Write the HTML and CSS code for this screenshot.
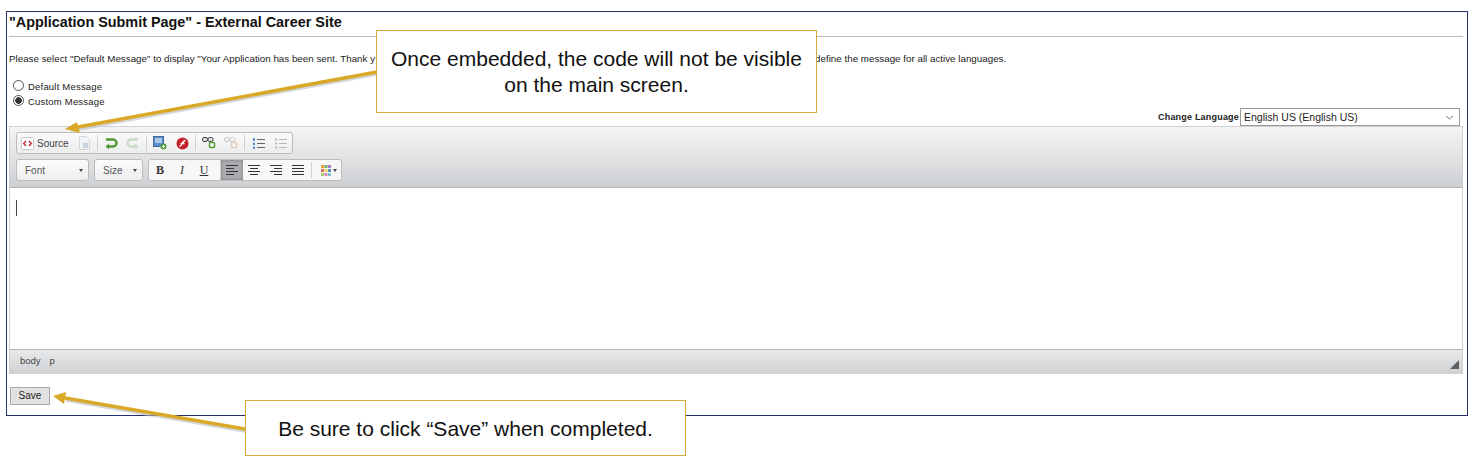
FILE: index.html
```html
<!DOCTYPE html>
<html>
    <head>
        <meta charset="utf-8">
        <title>Application Submit Page</title>
        <link rel="stylesheet" href="styles.css">
    </head>
    <body>
        <div class="frame">
            <h1 class="title">"Application Submit Page" - External Career Site</h1>
            <p class="intro"><span class="intro-left">Please select "Default Message" to display "Your Application has been sent. Thank y</span><span class="intro-right">define the message for all active languages.</span></p>
            <div class="radios">
                <label class="radio"><span class="dot"></span>Default Message</label>
                <label class="radio"><span class="dot on"></span>Custom Message</label>
            </div>
            <div class="lang">
                <span class="lang-label">Change Language</span>
                <div class="select">English US (English US)
                    <svg width="9" height="5" viewBox="0 0 9 5"><path d="M1 1l3.5 3L8 1" fill="none" stroke="#777"/></svg>
                </div>
            </div>

            <div class="editor">
                <div class="toolbar">
                    <div class="row">
                        <div class="group">
                            <span class="btn source">
                                <svg width="13" height="13" viewBox="0 0 13 13"><rect x=".5" y=".5" width="12" height="12" rx="1" fill="#fff" stroke="#c9c9c9"/><path d="M5 4L2.7 6.5 5 9M8 4l2.3 2.5L8 9" fill="none" stroke="#c8333a" stroke-width="1.5"/></svg>
                                Source
                            </span>
                            <span class="btn w22 faded">
                                <svg width="13" height="14" viewBox="0 0 13 14"><path d="M1.5.5h7l3 3v10h-10z" fill="#f2f4f6" stroke="#b9c0c8"/><rect x="5" y="7" width="5" height="5" fill="#a9bdd2"/></svg>
                            </span>
                            <i class="sep"></i>
                            <span class="btn w22">
                                <svg width="14" height="13" viewBox="0 0 14 13"><path d="M2 2.5h7a3.5 3.5 0 010 7H4" fill="none" stroke="#4f9a35" stroke-width="2.4"/><path d="M5 6.5L1.5 9.5 5 12.5z" fill="#4f9a35"/></svg>
                            </span>
                            <span class="btn w22">
                                <svg width="14" height="13" viewBox="0 0 14 13"><path d="M12 2.5H5a3.5 3.5 0 000 7h5" fill="none" stroke="#c6dcc4" stroke-width="2.4"/><path d="M9 6.5l3.5 3-3.500 3z" fill="#c6dcc4"/></svg>
                            </span>
                            <i class="sep"></i>
                            <span class="btn w22">
                                <svg width="14" height="14" viewBox="0 0 14 14"><rect x=".5" y=".5" width="10" height="10" fill="#5b8dc9" stroke="#3e6a9e"/><rect x="2" y="2" width="7" height="5" fill="#a9c8ea"/><circle cx="10.500" cy="10.500" r="3" fill="#4f9a35"/><path d="M8.800 10.500h3.400M10.500 8.800v3.400" stroke="#fff"/></svg>
                            </span>
                            <span class="btn w22">
                                <svg width="13" height="13" viewBox="0 0 13 13"><circle cx="6.500" cy="6.500" r="6" fill="#c4202a"/><path d="M3.500 9.500c2.500 0 2.500-6 6-6M4.500 6.500h4" fill="none" stroke="#fff" stroke-width="1.300"/></svg>
                            </span>
                            <i class="sep"></i>
                            <span class="btn w22">
                                <svg width="14" height="12" viewBox="0 0 14 12"><rect x=".5" y=".5" width="5" height="4" rx="1.500" fill="#ddd" stroke="#444"/><rect x="6" y=".5" width="5" height="4" rx="1.500" fill="#ddd" stroke="#444"/><rect x="7.500" y="5.500" width="5" height="5" rx="1" fill="#fff" stroke="#4f9a35" stroke-width="1.500"/></svg>
                            </span>
                            <span class="btn w22 faded">
                                <svg width="14" height="12" viewBox="0 0 14 12"><rect x=".5" y=".5" width="5" height="4" rx="1.500" fill="#eee" stroke="#aaa"/><rect x="6" y=".5" width="5" height="4" rx="1.500" fill="#eee" stroke="#aaa"/><rect x="7.500" y="5.500" width="5" height="5" rx="1" fill="#fff" stroke="#e2b28c" stroke-width="1.500"/></svg>
                            </span>
                            <i class="sep"></i>
                            <span class="btn w22">
                                <svg width="13" height="13" viewBox="0 0 13 13"><path d="M5 2.500h8M5 6.500h8M5 10.500h8" stroke="#666"/><path d="M1 1h2v3H1zM1 5.500h2v2.500H1zM1 9.500h2V12H1z" fill="#5b8dc9"/></svg>
                            </span>
                            <span class="btn w22 faded">
                                <svg width="13" height="13" viewBox="0 0 13 13"><path d="M5 2.500h8M5 6.500h8M5 10.500h8" stroke="#888"/><path d="M1 1.500h2v2H1zM1 5.500h2v2H1zM1 9.500h2v2H1z" fill="#8a94a0"/></svg>
                            </span>
                        </div>
                    </div>
                    <div class="row">
                        <div class="combo font-combo">Font<b class="caret"></b></div>
                        <div class="combo size-combo">Size<b class="caret"></b></div>
                        <div class="group tall">
                            <span class="btn w22 fmt bold">B</span>
                            <span class="btn w22 fmt ital">I</span>
                            <span class="btn w22 fmt under">U</span>
                            <i class="sep flush"></i>
                            <span class="btn w22 align active">
                                <svg width="12" height="11" viewBox="0 0 12 11"><path d="M0 .5h12M0 3.500h8M0 6.500h12M0 9.500h8" stroke="#333"/></svg>
                            </span>
                            <span class="btn w22 align">
                                <svg width="12" height="11" viewBox="0 0 12 11"><path d="M0 .5h12M2 3.500h8M0 6.500h12M2 9.500h8" stroke="#333"/></svg>
                            </span>
                            <span class="btn w22 align">
                                <svg width="12" height="11" viewBox="0 0 12 11"><path d="M0 .5h12M4 3.500h8M0 6.500h12M4 9.500h8" stroke="#333"/></svg>
                            </span>
                            <span class="btn w22 align">
                                <svg width="12" height="11" viewBox="0 0 12 11"><path d="M0 .5h12M0 3.500h12M0 6.500h12M0 9.500h12" stroke="#333"/></svg>
                            </span>
                            <i class="sep"></i>
                            <span class="btn colors">
                                <svg width="10" height="11" viewBox="0 0 10 11"><path d="M0 0h3v3H0z" fill="#d9a441"/><path d="M3.500 0h3v3h-3z" fill="#6fae5b"/><path d="M7 0h3v3H7z" fill="#b678c9"/><path d="M0 4h3v3H0z" fill="#e0705a"/><path d="M3.500 4h3v3h-3z" fill="#e8d35c"/><path d="M7 4h3v3H7z" fill="#5b8dc9"/><path d="M0 8h3v3H0z" fill="#a9c86a"/><path d="M3.500 8h3v3h-3z" fill="#d98ab0"/><path d="M7 8h3v3H7z" fill="#79c4cf"/></svg>
                                <b class="caret small"></b>
                            </span>
                        </div>
                    </div>
                </div>
                <div class="content"><span class="cursor"></span></div>
                <div class="statusbar">
                    <span>body</span><span>p</span>
                    <svg class="grip" width="9" height="9" viewBox="0 0 9 9"><path d="M9 0v9H0z" fill="#5e6164"/></svg>
                </div>
            </div>

            <button class="save">Save</button>
        </div>

        <!-- callouts sit over the page -->
        <svg class="arrows" width="1475" height="462" viewBox="0 0 1475 462">
            <path d="M377 72L79 127" stroke="#b9bcc4" stroke-width="3.500" opacity=".6" transform="translate(0 2)"/>
            <path d="M377 72L78 127" stroke="#d9a826" stroke-width="3.500"/>
            <path d="M65 129l12-7 3 11z" fill="#d9a826"/>
            <path d="M245 429L66 398" stroke="#b9bcc4" stroke-width="3.500" opacity=".6" transform="translate(0 2)"/>
            <path d="M245 429L65 398" stroke="#d9a826" stroke-width="3.500"/>
            <path d="M53 396l13-4-2 12z" fill="#d9a826"/>
        </svg>
        <div class="callout top">Once embedded, the code will not be visible on the main screen.</div>
        <div class="callout bottom">Be sure to click &ldquo;Save&rdquo; when completed.</div>
    </body>
</html>
```

FILE: styles.css
```css
body {
    margin: 0;
    background-color: #fff;
    color: #222;
    font-family: "Liberation Sans", Arial, sans-serif;
    font-size: 9.5px;
}
.frame {
    margin: 11px 0 0 6px;
    width: 1454px;
    height: 403px;
    border: 1px solid #262f6d;
    padding: 0 4px 0 2px;
}
.title {
    margin: 0;
    padding: 3px 0 6px 0;
    height: 15px;
    line-height: 15px;
    font-size: 14.4px;
    color: #111;
    border-bottom: 1px solid #bbb;
}
.intro {
    display: flex;
    margin: 0;
    padding-top: 16px;
    font-size: 9.8px;
    line-height: 11px;
    white-space: nowrap;
}
.intro-right {
    margin-left: 440px;
}
.radios {
    margin: 15px 0 0 4px;
}
.radio {
    display: flex;
    align-items: center;
    height: 15px;
    gap: 4px;
    letter-spacing: .2px;
}
.dot {
    width: 11px;
    height: 11px;
    margin-top: -3px;
    box-sizing: border-box;
    border: 1px solid #555;
    border-radius: 50%;
    background-color: #fff;
}
.dot.on {
    background: radial-gradient(circle, #333 0 3px, #fff 3.6px);
}
.lang {
    display: flex;
    justify-content: flex-end;
    align-items: center;
    margin: -1px 3px 0 0;
    height: 18px;
}
.lang-label {
    font-weight: bold;
    font-size: 9px;
    letter-spacing: .2px;
    margin-right: 1px;
}
.select {
    display: flex;
    justify-content: space-between;
    align-items: center;
    width: 220px;
    height: 18px;
    box-sizing: border-box;
    padding: 0 5px 0 3px;
    border: 1px solid #9a9a9a;
    font-size: 10.5px;
}
.editor {
    border: 1px solid #d1d1d1;
    height: 248px;
    box-sizing: border-box;
    display: flex;
    flex-direction: column;
}
.toolbar {
    height: 61px;
    box-sizing: border-box;
    padding: 5px 6px 0 6px;
    background: linear-gradient(#f4f4f5, #cdd0d3);
    border-bottom: 1px solid #b6b6b6;
}
.row {
    display: flex;
    gap: 5px;
    height: 22px;
    margin-bottom: 5px;
}
.group {
    display: flex;
    align-items: center;
    height: 22px;
    box-sizing: border-box;
    padding: 0 1px 0 3px;
    border: 1px solid #bcbcbc;
    border-radius: 3px;
    background: linear-gradient(#fafafa, #eceded);
}
.group.tall {
    padding: 0;
    background: #f7f7f7;
}
.btn {
    display: flex;
    align-items: center;
    justify-content: center;
    height: 20px;
    font-size: 10px;
    color: #444;
}
.w22 {
    width: 22px;
}
.faded {
    opacity: .55;
}
.source {
    gap: 3px;
    width: 53px;
    justify-content: flex-start;
    padding-left: 1px;
    box-sizing: border-box;
}
.sep {
    display: block;
    width: 1px;
    height: 16px;
    margin: 0 2px;
    background-color: #cfd1d3;
}
.sep.flush {
    margin: 0 0 0 5px;
    height: 20px;
}
.fmt {
    font-family: "Liberation Serif", serif;
    font-size: 12px;
    color: #333;
}
.bold {
    font-weight: bold;
}
.ital {
    font-style: italic;
}
.under {
    text-decoration: underline;
}
.active {
    background-color: #a9abae;
    box-shadow: inset 0 0 3px #777;
}
.colors {
    gap: 2px;
    padding: 0 4px 0 7px;
}
.combo {
    display: flex;
    justify-content: space-between;
    align-items: center;
    height: 22px;
    box-sizing: border-box;
    padding: 0 5px 0 8px;
    border: 1px solid #bcbcbc;
    border-radius: 3px;
    background: linear-gradient(#fbfbfb, #eeeeee);
    font-size: 10px;
    color: #555;
}
.font-combo {
    width: 73px;
}
.size-combo {
    width: 49px;
}
.caret {
    width: 0;
    height: 0;
    border-left: 2.500px solid transparent;
    border-right: 2.500px solid transparent;
    border-top: 3px solid #444;
}
.content {
    flex: 1;
    background-color: #fff;
    padding: 12px 6px;
}
.cursor {
    display: block;
    width: 1px;
    height: 16px;
    background-color: #444;
}
.statusbar {
    display: flex;
    align-items: center;
    gap: 9px;
    height: 24px;
    box-sizing: border-box;
    padding: 0 3px 2px 10px;
    border-top: 1px solid #b6b6b6;
    background: linear-gradient(#e8e9ea, #cfd2d4);
    color: #444;
    font-size: 9.5px;
}
.grip {
    margin-left: auto;
    margin-top: 7px;
}
.save {
    display: block;
    margin: 13px 0 0 1px;
    width: 40px;
    height: 18px;
    padding: 0 0 2px 0;
    border: 1px solid #a9a9a9;
    background-color: #e0e1e3;
    color: #222;
    font-family: "Liberation Sans", Arial, sans-serif;
    font-size: 10px;
}
.arrows {
    position: absolute;
    left: 0;
    top: 0;
}
.callout {
    position: absolute;
    display: flex;
    align-items: center;
    justify-content: center;
    text-align: center;
    box-sizing: border-box;
    width: 441px;
    padding: 0 10px;
    background-color: #fff;
    border: 1px solid #d4ab3c;
    color: #111;
    font-size: 21px;
    line-height: 26px;
}
.callout.top {
    left: 376px;
    top: 30px;
    height: 83px;
}
.callout.bottom {
    left: 245px;
    top: 400px;
    height: 56px;
    padding-top: 2px;
}
```
